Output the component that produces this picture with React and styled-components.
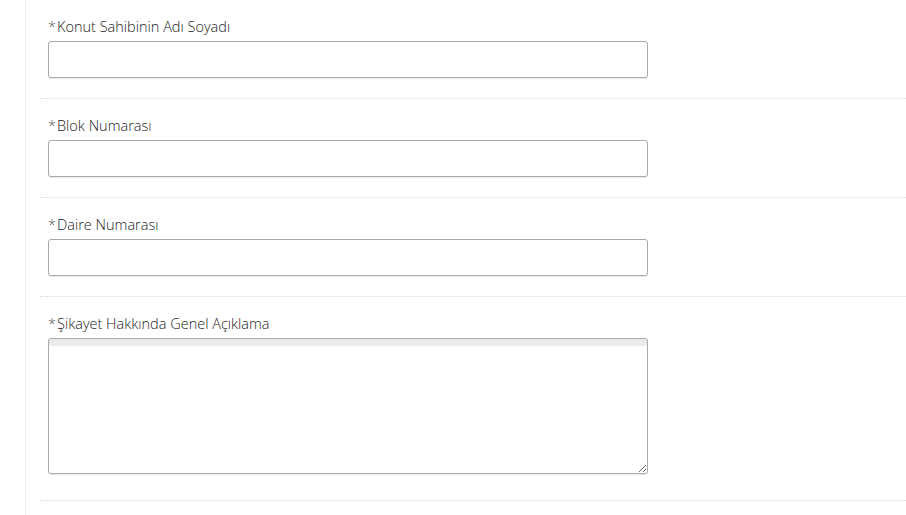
import styled, { createGlobalStyle } from "styled-components";

const GlobalStyle = createGlobalStyle`
  body {
    margin: 0;
    background: #fff;
    font-family: "Open Sans", "Liberation Sans", sans-serif;
  }
`;

const Page = styled.div`
  padding-left: 25px;
  min-height: 515px;
`;

const Main = styled.div`
  border-left: 1px solid #ebebeb;
  padding-left: 14px;
  min-height: 515px;
`;

const Row = styled.div`
  padding: 17px 0 20px 8px;
  border-bottom: 1px dotted #dcdcdc;
`;

const Label = styled.label`
  display: block;
  font-size: 14.5px;
  font-weight: 300;
  line-height: 20px;
  color: #222;
  margin-bottom: 4px;
`;

const Star = styled.span`
  color: #555;
  margin-right: 1px;
`;

const Input = styled.input`
  display: block;
  box-sizing: border-box;
  width: 600px;
  height: 37px;
  border: 1px solid #a9a9a9;
  border-radius: 3px;
  box-shadow: 0 1px 1px rgba(0, 0, 0, 0.08);
  background: #fff;
  padding: 6px 10px;
  font: inherit;
  &:focus {
    outline: none;
  }
`;

const TextArea = styled.textarea`
  display: block;
  box-sizing: border-box;
  width: 600px;
  height: 136px;
  border: 1px solid #a9a9a9;
  border-radius: 3px;
  box-shadow: inset 0 7px 0 #e9ebed, 0 1px 1px rgba(0, 0, 0, 0.08);
  background: #fff;
  padding: 10px;
  font: inherit;
  margin-bottom: 6px;
  &:focus {
    outline: none;
  }
`;

const fields = [
  { id: "owner", label: "Konut Sahibinin Adı Soyadı" },
  { id: "block", label: "Blok Numarası" },
  { id: "flat", label: "Daire Numarası" },
];

export default function App() {
  return (
    <Page>
      <GlobalStyle />
      <Main>
        {fields.map((f) => (
          <Row key={f.id}>
            <Label htmlFor={f.id}>
              <Star>*</Star>
              {f.label}
            </Label>
            <Input id={f.id} type="text" />
          </Row>
        ))}
        <Row>
          <Label htmlFor="desc">
            <Star>*</Star>
            Şikayet Hakkında Genel Açıklama
          </Label>
          <TextArea id="desc" />
        </Row>
      </Main>
    </Page>
  );
}
